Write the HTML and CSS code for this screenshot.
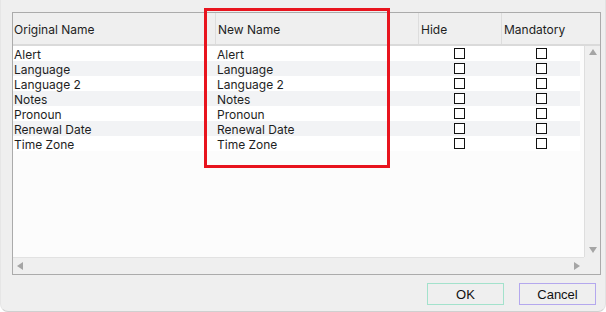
FILE: index.html
```html
<!DOCTYPE html>
<html lang="en">
<head>
    <meta name="viewport" content="width=device-width, initial-scale=1">
    <title>Rename Fields</title>
    <link rel="stylesheet" href="styles.css">
</head>
<body>
    <div class="window">
        <div class="table-frame">
            <div class="table-head">
                <div class="th">Original Name</div>
                <div class="th">New Name</div>
                <div class="th">Hide</div>
                <div class="th">Mandatory</div>
            </div>
            <div class="table-body">
                <div class="row"><div class="td">Alert</div><div class="td">Alert</div><div class="td check"><span class="box"></span></div><div class="td check"><span class="box"></span></div></div>
                <div class="row"><div class="td">Language</div><div class="td">Language</div><div class="td check"><span class="box"></span></div><div class="td check"><span class="box"></span></div></div>
                <div class="row"><div class="td">Language 2</div><div class="td">Language 2</div><div class="td check"><span class="box"></span></div><div class="td check"><span class="box"></span></div></div>
                <div class="row"><div class="td">Notes</div><div class="td">Notes</div><div class="td check"><span class="box"></span></div><div class="td check"><span class="box"></span></div></div>
                <div class="row"><div class="td">Pronoun</div><div class="td">Pronoun</div><div class="td check"><span class="box"></span></div><div class="td check"><span class="box"></span></div></div>
                <div class="row"><div class="td">Renewal Date</div><div class="td">Renewal Date</div><div class="td check"><span class="box"></span></div><div class="td check"><span class="box"></span></div></div>
                <div class="row"><div class="td">Time Zone</div><div class="td">Time Zone</div><div class="td check"><span class="box"></span></div><div class="td check"><span class="box"></span></div></div>
            </div>
            <div class="vscroll">
                <span class="arrow up"></span>
                <span class="arrow down"></span>
            </div>
            <div class="hscroll">
                <span class="arrow left"></span>
                <span class="arrow right"></span>
            </div>
            <div class="corner"></div>
        </div>
        <div class="buttons">
            <button class="btn btn-ok">OK</button>
            <button class="btn btn-cancel">Cancel</button>
        </div>
        <div class="highlight"></div>
    </div>
</body>
</html>
```

FILE: styles.css
```css
html, body {
    margin: 0;
    padding: 0;
    background-color: #ffffff;
}

body {
    font-family: 'Inter', 'Noto Sans', sans-serif;
    font-size: 12px;
    color: #1e1e1e;
}

.window {
    position: relative;
    width: 606px;
    height: 312px;
    box-sizing: border-box;
    padding: 12px 6px 0 11px;
    background-color: #efefef;
    border-bottom-left-radius: 8px;
    border-bottom-right-radius: 8px;
    border-right: 1px solid #e2e2e2;
    border-left: 1px solid #e6e6e6;
    border-bottom: 1px solid #d0d0d0;
    overflow: hidden;
}

.table-frame {
    width: 589px;
    height: 263px;
    box-sizing: border-box;
    border: 1px solid #ababab;
    display: grid;
    grid-template-columns: 1fr 16px;
    grid-template-rows: 33px 1fr 17px;
}

.table-head {
    grid-column: 1 / 3;
    display: grid;
    grid-template-columns: 202px 203px 83px 1fr;
    background-color: #efefef;
    border-bottom: 2px solid #dadada;
}

.th {
    display: flex;
    align-items: center;
    padding-left: 2px;
    padding-top: 2px;
    border-left: 1px solid #dddddd;
}

.th:first-child {
    border-left: none;
    padding-left: 1px;
}

.table-body {
    background-color: #fcfcfc;
    padding-right: 4px;
}

.row {
    display: grid;
    grid-template-columns: 202px 203px 83px 1fr;
    height: 15px;
    background-color: #ffffff;
}

.row:nth-child(even) {
    background-color: #f2f3f5;
}

.td {
    display: flex;
    align-items: center;
    padding-left: 2px;
    padding-top: 2px;
    line-height: 13px;
}

.td:first-child {
    padding-left: 1px;
}

.td.check {
    justify-content: center;
    padding-left: 0;
    padding-top: 0;
}

.td.check:last-child {
    padding-left: 2px;
}

.box {
    width: 9px;
    height: 9px;
    border: 1px solid #111111;
    background-color: #ffffff;
}

.vscroll {
    position: relative;
    background-color: #efefef;
    border-left: 1px solid #dedede;
}

.hscroll {
    position: relative;
    background-color: #efefef;
    border-top: 1px solid #e2e2e2;
}

.corner {
    background-color: #efefef;
}

.arrow {
    position: absolute;
    width: 0;
    height: 0;
    border: 4px solid transparent;
}

.arrow.up {
    top: 3px;
    left: 4px;
    border-bottom: 6px solid #a5a5a5;
    border-top: none;
}

.arrow.down {
    bottom: 4px;
    left: 4px;
    border-top: 6px solid #a5a5a5;
    border-bottom: none;
}

.arrow.left {
    top: 4px;
    left: 4px;
    border-right: 6px solid #a5a5a5;
    border-left: none;
}

.arrow.right {
    top: 4px;
    right: 4px;
    border-left: 6px solid #a5a5a5;
    border-right: none;
}

.buttons {
    display: flex;
    justify-content: flex-end;
    gap: 15px;
    padding-top: 8px;
    padding-right: 3px;
}

.btn {
    width: 77px;
    height: 22px;
    box-sizing: border-box;
    background-color: #efefef;
    font-family: 'Liberation Sans', Arial, sans-serif;
    font-size: 13px;
    color: #111111;
    padding: 0;
}

.btn-ok {
    border: 1px solid #a3e2cc;
}

.btn-cancel {
    border: 1px solid #b4a8ee;
}

.highlight {
    position: absolute;
    left: 203px;
    top: 8px;
    width: 186px;
    height: 160px;
    box-sizing: border-box;
    border: 3px solid #e8141e;
}
```
